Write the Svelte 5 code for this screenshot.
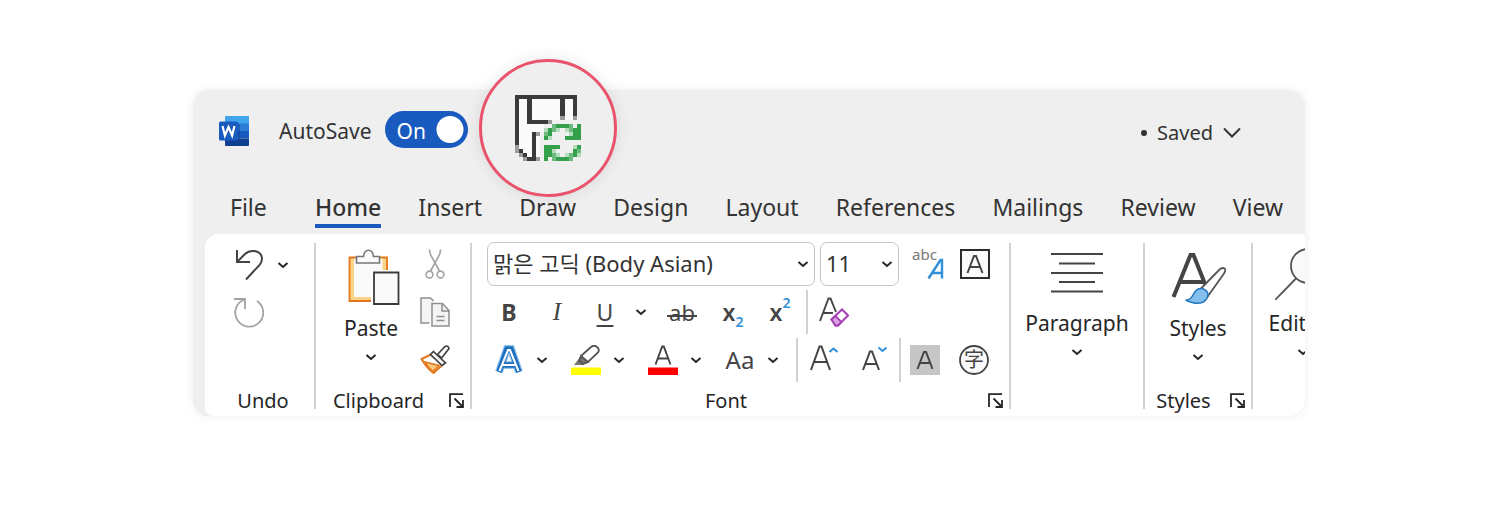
<script>
  const tabs = ['File', 'Home', 'Insert', 'Draw', 'Design', 'Layout', 'References', 'Mailings', 'Review', 'View'];
  let active = $state('Home');
  let autosave = $state(true);

  // 16x16 bitmap: k dark, g grey, w white, G green, m mid green, l light green
  const bitmap = [
    'kkkkkkkkkkkkkkk.',
    'kwwkwwwwwwwkwwk.',
    'kwwkwwwwwwwkwwk.',
    'kwwkwwwwwwwkwwk.',
    'kwwkwwwwwwwkwwk.',
    'kwwkwwwwwwwgwwg.',
    'kwwkkkkkg.......',
    'kwwwwww..mGGGm.G',
    'kwwwwwwlGml.lmGG',
    'kwwwkg.mG....lGG',
    'kwwwkw.Gl...GGGG',
    'kwwwkw..........',
    'gwwwkw.GGGG...lG',
    'gkwwkw.GGl....Gm',
    '.gkwkw.GGml.lmGl',
    '..gkkg.G.mGGGm..',
  ];
  const inks = { k: '#3a3a3a', g: '#9b9b9b', w: '#fafafa', G: '#35a04c', m: '#6dba7e', l: '#b5dcbd' };
  const side = 66;
  const edge = (n) => Math.round((n * side) / 16);
  const pixels = bitmap.flatMap((row, y) =>
    [...row]
      .map((c, x) => ({
        x: edge(x),
        y: edge(y),
        w: edge(x + 1) - edge(x),
        h: edge(y + 1) - edge(y),
        fill: inks[c],
      }))
      .filter((p) => p.fill)
  );
</script>

{#snippet chevron()}
  <svg class="chev" viewBox="0 0 12 8" width="12" height="8" aria-hidden="true">
    <path d="M1.500 2l4.500 4 4.500-4" fill="none" stroke="#262626" stroke-width="2" />
  </svg>
{/snippet}

{#snippet launcher(name)}
  <button class="launcher" aria-label={name}>
    <svg viewBox="0 0 16 16" width="16" height="16">
      <path d="M1 14V1.200H14M5.500 5.500l8 8M14 7v7H7.500" fill="none" stroke="#262626" stroke-width="1.800" />
    </svg>
  </button>
{/snippet}

<main>
  <section class="window">
    <header>
      <svg viewBox="0 0 30 30" width="30" height="30" aria-label="Word" role="img">
        <path d="M7 0h22q1 0 1 1v7H6V1q0-1 1-1z" fill="#41a5ee" />
        <path d="M6 7.500h24V15H6z" fill="#2b7cd3" />
        <path d="M6 15h24v7.500H6z" fill="#185abd" />
        <path d="M6 22.500h24V29q0 1-1 1H7q-1 0-1-1z" fill="#103f91" />
        <path d="M6 7h13q2 0 2 2v15q0 2-2 2H6z" fill="#103f91" opacity=".45" />
        <rect y="5.500" width="19" height="19" rx="1.500" fill="#185abd" />
        <path d="M3.500 10l2.400 9.500L9.500 11l3.600 8.500L15.500 10" fill="none" stroke="#fff" stroke-width="2.200" />
      </svg>
      <label class="autosave">
        <span>AutoSave</span>
        <span class="switch">
          <input type="checkbox" role="switch" bind:checked={autosave} />
          <span class="state">{autosave ? 'On' : 'Off'}</span>
        </span>
      </label>
      <button class="lens" aria-label="Save">
        <svg viewBox="0 0 66 66" width={side} height={side} shape-rendering="crispEdges">
          {#each pixels as p}
            <rect x={p.x} y={p.y} width={p.w} height={p.h} fill={p.fill} />
          {/each}
        </svg>
      </button>
      <button class="saved">
        <span class="dot"></span>
        Saved
        <svg viewBox="0 0 18 12" width="18" height="12" aria-hidden="true">
          <path d="M1 1.500l8 8 8-8" fill="none" stroke="#333" stroke-width="2" />
        </svg>
      </button>
    </header>

    <nav>
      {#each tabs as tab}
        <button class="tab" class:active={tab === active} onclick={() => (active = tab)}>{tab}</button>
      {/each}
    </nav>

    <div class="shelf">
      <div class="ribbon">
        <section class="group">
          <div class="undo">
            <button aria-label="Undo">
              <svg viewBox="0 0 30 32" width="30" height="32">
                <path d="M3 1v12h13M3.500 12.500L11 5C16 .5 25 1 27.500 7q1.500 5-2 9L12 30.500" fill="none" stroke="#444" stroke-width="2" />
              </svg>
            </button>
            <button aria-label="Undo history">{@render chevron()}</button>
            <button aria-label="Redo">
              <svg viewBox="0 0 30 32" width="30" height="32">
                <path d="M0 2h11v10M10.500 2.500A14 14 0 1 0 23 4" fill="none" stroke="#a3a3a3" stroke-width="1.800" />
              </svg>
            </button>
          </div>
          <footer><h2 class="lead">Undo</h2></footer>
        </section>

        <section class="group">
          <div class="clipboard">
            <button class="big paste">
              <svg viewBox="0 0 52 56" width="52" height="56" aria-hidden="true">
                <path d="M2 9h37v43H2z" fill="#fafafa" />
                <path d="M3.500 9v41.500H24M37 9v12" fill="none" stroke="#fbd388" stroke-width="5" />
                <path d="M23 52H1.500V8.500H9M32 8.500h7V21" fill="none" stroke="#e3771c" stroke-width="1.800" />
                <path d="M8.500 14V7.500h7C16 3 18 1.200 20.500 1.200S25 3 25.500 7.500h6V14z" fill="#fafafa" stroke="#777" stroke-width="1.600" />
                <path d="M23 21h29v35H23z" fill="#fff" />
                <path d="M26 23.500h24.500v31.500H26z" fill="#fafafa" stroke="#3a3a3a" stroke-width="1.800" />
              </svg>
              <span>Paste</span>
              {@render chevron()}
            </button>
            <div class="tools">
              <button aria-label="Cut">
                <svg viewBox="0 0 30 30" width="30" height="30">
                  <g fill="none" stroke="#a3a3a3" stroke-width="1.600">
                    <path d="M9.500 0.500q0 4 2 7L19.500 22M20.500 0.500q0 4-2 7L10.500 22" />
                    <circle cx="9.500" cy="25.500" r="3.400" /><circle cx="20.500" cy="25.500" r="3.400" />
                  </g>
                </svg>
              </button>
              <button aria-label="Copy">
                <svg viewBox="0 0 30 30" width="30" height="30">
                  <g fill="#f4f4f4" stroke="#8f8f8f" stroke-width="1.500">
                    <path d="M9.500 26H1V1h9.500l3 3" />
                    <path d="M12 6.500h10.500l6.500 7V29H12z" />
                    <path d="M22 6.500V14h7M16.500 19.500h8M16.500 23.500h8" fill="none" />
                  </g>
                </svg>
              </button>
              <button aria-label="Format painter">
                <svg viewBox="0 0 30 30" width="30" height="30">
                  <path d="M11 9.500L1.500 14Q6 22 13.500 28L22.500 20z" fill="#fff" stroke="#e3771c" stroke-width="2" />
                  <path d="M5 17l14 3.500-6 6Q8 22.500 5 17z" fill="#fbc878" stroke="#e3771c" stroke-width="1.500" />
                  <path d="M13.500 6.500l12 11.500-3.500 2.500L10.500 9.500z" fill="#f4f4f4" stroke="#444" stroke-width="1.700" />
                  <path d="M17.500 9.500L25 1.500q3-1.500 4 2L21.500 13z" fill="#fff" stroke="#444" stroke-width="1.700" />
                </svg>
              </button>
            </div>
          </div>
          <footer><h2>Clipboard</h2>{@render launcher('Clipboard options')}</footer>
        </section>

        <section class="group">
          <div class="row fields">
            <label class="field">
              <select aria-label="Font"><option>맑은 고딕 (Body Asian)</option></select>
              {@render chevron()}
            </label>
            <label class="field">
              <select aria-label="Font size"><option>11</option></select>
              {@render chevron()}
            </label>
            <div class="pair">
              <button aria-label="Phonetic guide">
                <svg viewBox="0 0 30 30" width="30" height="30" overflow="visible">
                  <text x="-1" y="11" font-size="15" fill="#777">abc</text>
                  <path d="M15.500 29.500L27.500 11h1.500V29.500M19.500 24H29" fill="none" stroke="#2f8fd8" stroke-width="2.400" />
                </svg>
              </button>
              <button aria-label="Character border">
                <svg viewBox="0 0 30 30" width="30" height="30">
                  <rect x="1" y="1" width="28" height="28" fill="#fafafa" stroke="#2b2b2b" stroke-width="2" />
                  <path d="M7.500 24L14 7h2l6.500 17M10 18h10" fill="none" stroke="#444" stroke-width="2" />
                </svg>
              </button>
            </div>
          </div>

          <div class="row styles">
            <button class="bold">B</button>
            <button class="italic">I</button>
            <button class="under">U</button>
            <button aria-label="Underline style">{@render chevron()}</button>
            <button><span class="strike">ab</span></button>
            <button class="script">x<sub>2</sub></button>
            <button class="script">x<sup>2</sup></button>
            <i class="rule"></i>
            <button aria-label="Clear formatting">
              <svg viewBox="0 0 30 30" width="30" height="30">
                <path d="M1 24L9.500 1.500h2L17 15M4.500 16H14" fill="none" stroke="#444" stroke-width="1.900" />
                <path d="M12.500 22.500L23 12.500l6 6-10 10h-2.500z" fill="#fff" stroke="#a43fb5" stroke-width="2" />
                <path d="M12.500 22.500l4-3.500 6 6-3.500 3.500h-2.500z" fill="#d9a0e2" stroke="#a43fb5" stroke-width="1.800" />
              </svg>
            </button>
          </div>

          <div class="row effects">
            <button class="split" aria-label="Text effects">
              <svg viewBox="0 0 30 30" width="30" height="30">
                <g fill="none">
                  <path d="M5 27L13 4h4l8 23M9 20h12" stroke="#8fc3ee" stroke-width="8" />
                  <path d="M5 27L13 4h4l8 23M9 20h12" stroke="#1b6fbe" stroke-width="5.500" />
                  <path d="M5.500 26L14 5h2l8.500 21M9 20h12" stroke="#fff" stroke-width="2" />
                </g>
              </svg>
              {@render chevron()}
            </button>
            <button class="split" aria-label="Highlight colour">
              <svg viewBox="0 0 30 30" width="30" height="30">
                <path d="M3 20l6-8 7 5.500-4 2.500z" fill="#777" />
                <path d="M10 11L20 2q3-2.500 6 0t1 5.500L17 17l-5 1.500-3.500-3z" fill="#fff" stroke="#555" stroke-width="1.800" />
                <path d="M10 11l7 6-5 2-3.500-3z" fill="#777" stroke="#555" stroke-width="1.800" />
                <path d="M0 22.500h30V30H0z" fill="#ff0" />
              </svg>
              {@render chevron()}
            </button>
            <button class="split" aria-label="Font colour">
              <svg viewBox="0 0 30 30" width="30" height="30">
                <path d="M7.500 19.500L14.200 1.500h1.600l6.700 18M10 13.500h10" fill="none" stroke="#444" stroke-width="1.900" />
                <path d="M0 22.500h30V30H0z" fill="#f00" />
              </svg>
              {@render chevron()}
            </button>
            <button class="split"><span class="case">Aa</span>{@render chevron()}</button>
            <i class="rule"></i>
            <button aria-label="Grow font">
              <svg viewBox="0 0 30 30" width="30" height="30">
                <path d="M2 25L10.500 1.500h2L21 25M5.500 17h12" fill="none" stroke="#444" stroke-width="2" />
                <path d="M20.500 7l4-3.500 4 3.500" fill="none" stroke="#2f8fd8" stroke-width="2" />
              </svg>
            </button>
            <button aria-label="Shrink font">
              <svg viewBox="0 0 30 30" width="30" height="30">
                <path d="M3 25L10 6.500h2L19 25M6 19h10" fill="none" stroke="#444" stroke-width="2" />
                <path d="M18.500 2.500l4 3.500 4-3.500" fill="none" stroke="#2f8fd8" stroke-width="2" />
              </svg>
            </button>
            <i class="rule"></i>
            <button aria-label="Character shading">
              <svg viewBox="0 0 30 30" width="30" height="30">
                <path d="M0 0h30v30H0z" fill="#c6c6c6" />
                <path d="M7.500 24L14 7h2l6.500 17M10 18h10" fill="none" stroke="#444" stroke-width="2" />
              </svg>
            </button>
            <button aria-label="Enclose characters">
              <svg viewBox="0 0 30 30" width="30" height="30">
                <circle cx="15" cy="15" r="14" fill="#fafafa" stroke="#444" stroke-width="1.800" />
                <text class="cjk" x="15" y="22" font-size="20" text-anchor="middle" fill="#444">字</text>
              </svg>
            </button>
          </div>
          <footer><h2>Font</h2>{@render launcher('Font options')}</footer>
        </section>

        <section class="group">
          <button class="big tall">
            <svg viewBox="0 0 52 52" width="52" height="52" aria-hidden="true">
              <path d="M0 6h52M8 15.500h36M0 25h52M8 34h36M0 43.500h52" stroke="#444" stroke-width="2" />
            </svg>
            <span>Paragraph</span>
            {@render chevron()}
          </button>
        </section>

        <section class="group">
          <button class="big low">
            <svg viewBox="0 0 56 54" width="56" height="54" aria-hidden="true">
              <path d="M3.500 46L20.500 4h3L35 33M9.500 31h24" fill="none" stroke="#444" stroke-width="4" />
              <path d="M31.500 37L50 18q4-2 5 0t-2 6L38 45z" fill="#fff" stroke="#555" stroke-width="1.800" />
              <path d="M15.500 49q5 .5 8-6 4-7 10-5 7 3 3 10-6 8-21 1z" fill="#83beec" stroke="#2878c0" stroke-width="1.600" />
            </svg>
            <span>Styles</span>
            {@render chevron()}
          </button>
          <footer><h2>Styles</h2>{@render launcher('Styles options')}</footer>
        </section>

        <section class="group editing">
          <button class="big tall">
            <svg viewBox="0 0 56 52" width="56" height="52" aria-hidden="true">
              <circle cx="33" cy="18" r="17" fill="#fafafa" stroke="#555" stroke-width="1.800" />
              <path d="M21 30.500L0 52" stroke="#555" stroke-width="1.800" />
            </svg>
            <span>Editing</span>
            {@render chevron()}
          </button>
        </section>
      </div>
    </div>
  </section>
</main>

<style>
  :global(body) {
    margin: 0;
    background: #fff;
  }

  main {
    padding: 90px 195px 114px 193px;
    color: #333;
    font: 21px/28px 'Noto Sans', 'Noto Sans CJK KR', sans-serif;
  }

  button {
    display: flex;
    align-items: center;
    justify-content: center;
    padding: 0;
    border: 0;
    background: none;
    color: inherit;
    font: inherit;
    cursor: pointer;
  }

  svg {
    display: block;
    flex: none;
  }

  .window {
    border-radius: 16px;
    background: #efefef;
    box-shadow: 0 0 10px rgb(0 0 0 / 8%);
  }

  header {
    position: relative;
    display: flex;
    align-items: center;
    height: 82px;
    padding: 0 64px 0 26px;
  }

  .autosave {
    display: flex;
    align-items: center;
    gap: 13px;
    margin-left: 30px;
  }

  .switch {
    display: grid;
    align-items: center;
  }

  .switch input,
  .state {
    grid-area: 1 / 1;
  }

  .switch input {
    width: 83px;
    height: 37px;
    margin: 0 0 4px;
    border-radius: 19px;
    background: radial-gradient(circle at 65px 50%, #fff 13px, transparent 14px) #185abd;
    appearance: none;
  }

  .switch input:not(:checked) {
    background: radial-gradient(circle at 18px 50%, #fff 13px, transparent 14px) #777;
  }

  .state {
    padding-left: 12px;
    color: #fff;
    pointer-events: none;
  }

  .lens {
    position: absolute;
    top: -31px;
    left: 286px;
    width: 138px;
    height: 138px;
    border: 3px solid #e9536b;
    border-radius: 50%;
    background: #efefef;
    box-shadow: 0 0 16px rgb(0 0 0 / 10%);
  }

  .saved {
    gap: 10px;
    margin-left: auto;
    padding-top: 4px;
    font-size: 20px;
  }

  .dot {
    width: 6px;
    height: 6px;
    border-radius: 50%;
    background: #333;
  }

  nav {
    display: flex;
    justify-content: space-between;
    padding: 20px 22px 6px 37px;
  }

  .tab {
    height: 36px;
    padding-bottom: 2px;
    font-size: 23px;
    border-bottom: 4px solid transparent;
  }

  .tab:first-child {
    margin-right: 11px;
  }

  .tab.active {
    border-color: #185abd;
    font-weight: 500;
  }

  .shelf {
    padding-left: 12px;
  }

  .ribbon {
    display: grid;
    grid-template-columns: 111fr 156fr 539fr 134fr 108fr minmax(0, 52fr);
    overflow: hidden;
    padding: 9px 0 7px;
    border-radius: 14px 0 16px 8px;
    background: #fff;
  }

  .group {
    display: flex;
    flex-direction: column;
    height: 166px;
    border-right: 2px solid #d2d2d2;
  }

  .group.editing {
    border: 0;
  }

  footer {
    display: grid;
    grid-template-columns: 1fr auto;
    align-items: center;
    height: 16px;
    margin-top: auto;
    padding-right: 5px;
  }

  h2 {
    margin: 0;
    padding-right: 8px;
    color: #262626;
    font-size: 20px;
    font-weight: 400;
    line-height: 16px;
    text-align: center;
  }

  .lead {
    padding: 0 0 0 12px;
  }

  .undo {
    display: grid;
    grid-template-columns: 30px 12px;
    gap: 16px 13px;
    padding: 6px 0 0 29px;
  }

  .clipboard {
    display: flex;
    align-items: flex-start;
    justify-content: space-between;
    padding: 6px 20px 0 26px;
  }

  .tools {
    display: grid;
    gap: 18px;
  }

  .big {
    flex-direction: column;
    color: #262626;
  }

  .big span {
    margin: 9px 0 11px;
  }

  .tall {
    padding-top: 5px;
  }

  .low {
    padding-top: 8px;
  }

  .paste svg:first-child {
    margin-left: 6px;
  }

  .editing .big {
    width: 72px;
    margin-left: 14px;
  }

  .row {
    display: grid;
    align-items: center;
    height: 48px;
    margin-left: 13px;
    color: #444;
  }

  .row button {
    height: 40px;
  }

  .fields {
    grid-template-columns: 1fr 79px 94px;
    height: 44px;
    margin: -1px 11px 2px 15px;
    column-gap: 5px;
  }

  .pair {
    display: grid;
    grid-template-columns: 1fr 1fr;
  }

  .field {
    display: grid;
    align-items: center;
  }

  .field select {
    grid-area: 1 / 1;
    box-sizing: border-box;
    width: 100%;
    height: 44px;
    padding: 0 5px 2px;
    border: 1px solid #c4c4c4;
    border-radius: 7px;
    background: #fff;
    color: #333;
    font: inherit;
    font-size: 22px;
    appearance: none;
  }

  .field :global(.chev) {
    grid-area: 1 / 1;
    justify-self: end;
    margin-right: 6px;
    pointer-events: none;
  }

  .styles {
    grid-template-columns: 48px 48px 48px 23px 60px 42px 52px 2px 52px;
  }

  .effects {
    grid-template-columns: 77px 77px 77px 71px 2px 52px 49px 2px 48px 50px;
    padding-left: 9px;
  }

  .rule {
    height: 44px;
    background: #d2d2d2;
  }

  .split {
    justify-content: flex-start;
    gap: 12px;
  }

  .case {
    width: 30px;
    font-size: 24px;
  }

  .bold {
    font-weight: 700;
    font-size: 23px;
  }

  .italic {
    font: italic 25px 'Liberation Serif', serif;
  }

  .under {
    text-decoration: underline;
    text-underline-offset: 4px;
    font-size: 23px;
  }

  .strike {
    width: 30px;
    background: linear-gradient(#444, #444) 0 17px / 100% 2px no-repeat;
    font-size: 22px;
  }

  .script {
    font-weight: 600;
    font-size: 23px;
  }

  sub,
  sup {
    color: #2f8fd8;
    font-size: 14px;
    line-height: 14px;
  }

  sub {
    align-self: flex-end;
    margin-bottom: 3px;
  }

  sup {
    align-self: flex-start;
    margin-top: 4px;
  }

  text {
    font-family: 'Noto Sans', sans-serif;
  }

  .cjk {
    font-family: 'Noto Sans CJK KR', sans-serif;
  }
</style>
